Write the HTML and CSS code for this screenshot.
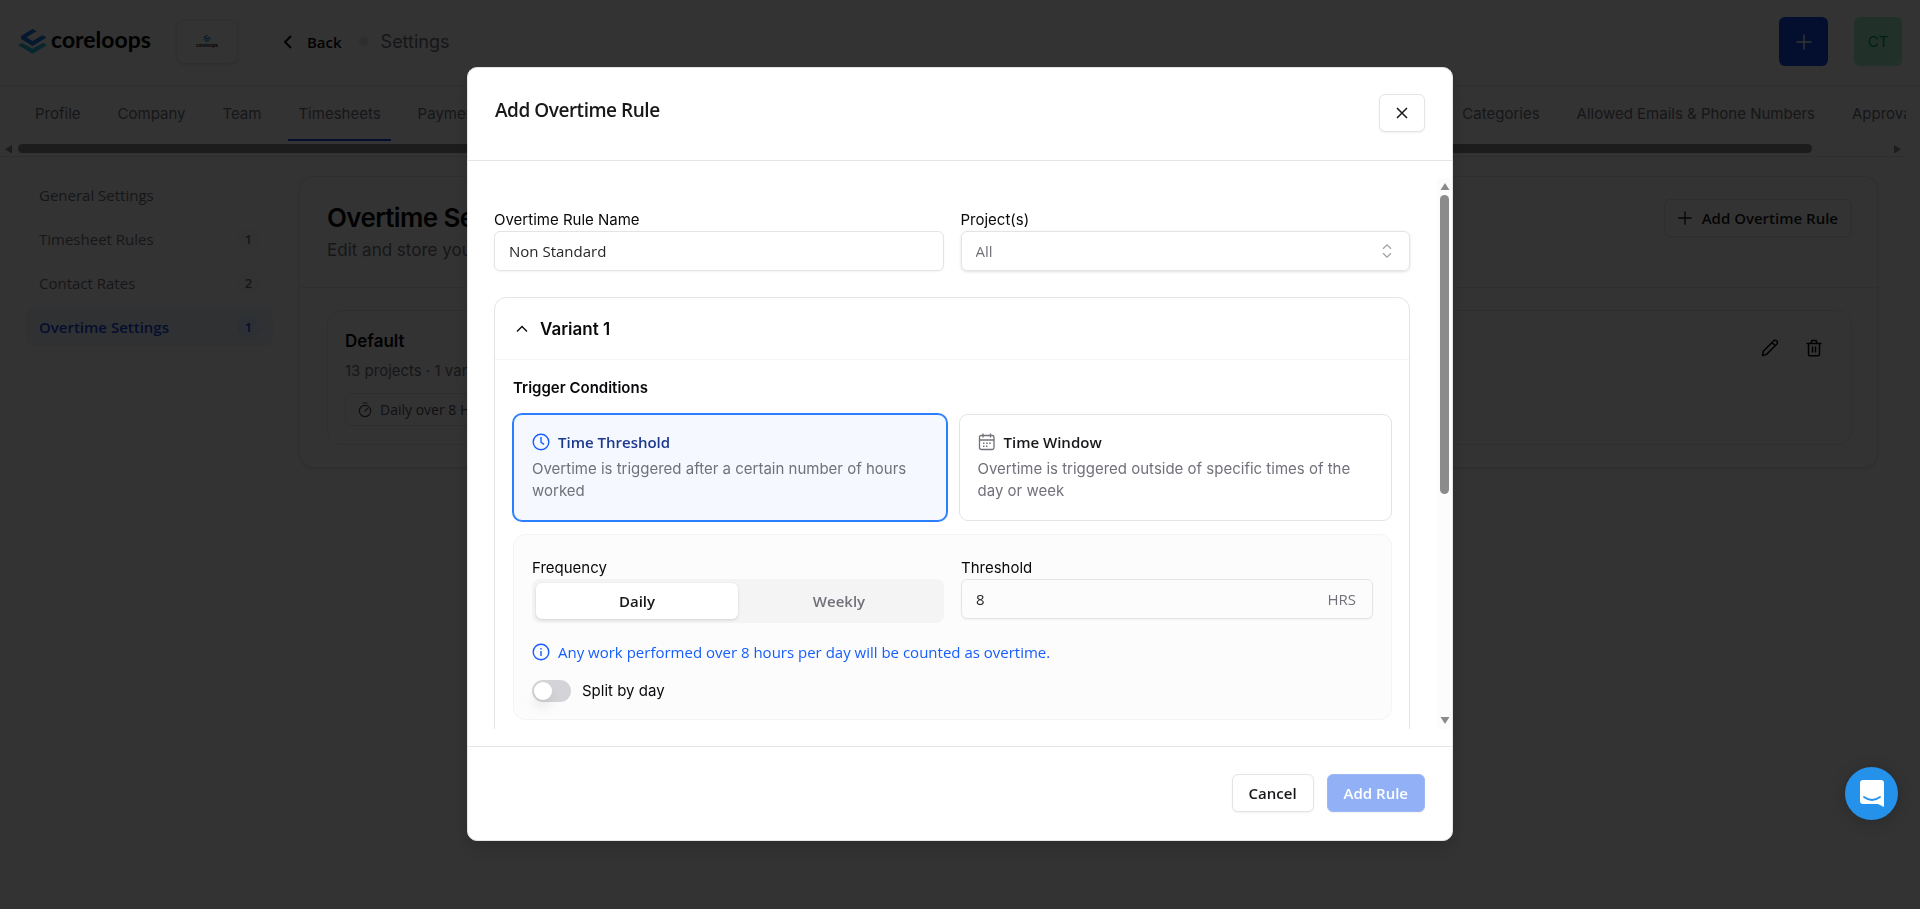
FILE: index.html
```html
<!DOCTYPE html>
<html lang="en">
<head>
    <meta charset="UTF-8">
    <meta name="viewport" content="width=device-width, initial-scale=1.0">
    <title>Overtime Settings</title>
    <link rel="stylesheet" href="styles.css">
</head>
<body>
    <!-- shared icons -->
    <svg width="0" height="0" class="defs">
        <symbol id="logo-mark" viewBox="0 0 29 25">
            <path d="M14.500 0 L18.500 2.200 L8.500 8.300 L14.500 12 L24.500 6.200 L28.500 8.500 L14.500 17 L3 10 V7 Z" fill="#1c78e0"/>
            <path d="M0 16 L4 14 L14.500 19.800 L25 14 L29 16 L14.500 24.800 Z" fill="#22b8dc"/>
        </symbol>
        <symbol id="plus" viewBox="0 0 16 16">
            <path d="M8 1v14M1 8h14" fill="none" stroke="currentColor" stroke-width="1.500" stroke-linecap="round"/>
        </symbol>
    </svg>

    <header class="topbar">
        <a href="#" class="logo"><svg width="29" height="25"><use href="#logo-mark"/></svg><span>coreloops</span></a>
        <button class="org"><svg width="8" height="7"><use href="#logo-mark"/></svg><span>coreloops</span></button>
        <a href="#" class="back">
            <svg width="10" height="14" viewBox="0 0 10 14"><path d="M8 1 L2 7 L8 13" fill="none" stroke="currentColor" stroke-width="2"/></svg>
            Back
        </a>
        <span class="dot"></span>
        <span class="crumb">Settings</span>
        <button class="new-btn" aria-label="New"><svg width="16" height="16"><use href="#plus"/></svg></button>
        <button class="avatar">CT</button>
    </header>

    <nav class="tabs">
        <a href="#">Profile</a>
        <a href="#">Company</a>
        <a href="#">Team</a>
        <a href="#" class="active">Timesheets</a>
        <a href="#">Payments</a>
        <a href="#" class="tab-right">Categories</a>
        <a href="#">Allowed Emails &amp; Phone Numbers</a>
        <a href="#" class="tab-cut">Approvals</a>
    </nav>
    <div class="hscroll">
        <svg width="8" height="10" viewBox="0 0 8 10"><path d="M8 1v8.500L1 5.200z"/></svg>
        <div class="hthumb"></div>
        <svg width="8" height="10" viewBox="0 0 8 10"><path d="M0 1v8.500l7-4.300z"/></svg>
    </div>

    <div class="layout">
        <aside class="sidebar">
            <a href="#">General Settings</a>
            <a href="#">Timesheet Rules <span class="count">1</span></a>
            <a href="#">Contact Rates <span class="count">2</span></a>
            <a href="#" class="active">Overtime Settings <span class="count">1</span></a>
        </aside>

        <main class="card">
            <div class="card-head">
                <div>
                    <h1>Overtime Settings</h1>
                    <p>Edit and store your overtime rules</p>
                </div>
                <button class="btn btn-add"><svg width="14" height="14"><use href="#plus"/></svg>Add Overtime Rule</button>
            </div>
            <div class="rule">
                <div>
                    <h2>Default</h2>
                    <p>13 projects · 1 variant</p>
                    <span class="chip">
                        <svg width="14" height="16" viewBox="0 0 14 16" fill="none" stroke="currentColor" stroke-width="1.200" stroke-linecap="round"><circle cx="7" cy="9" r="5.700"/><path d="M5 1h4M7 9l2.500-2.500"/></svg>
                        Daily over 8 HRS
                    </span>
                </div>
                <div class="rule-actions">
                    <button aria-label="Edit"><svg width="18" height="18" viewBox="0 0 18 18" fill="none" stroke="currentColor" stroke-width="1.500" stroke-linejoin="round"><path d="M1.500 16.500l.8-4.300L12.500 2a2.200 2.200 0 0 1 3.200 3.200L5.500 15.400zM11 3.500l3.200 3.200"/></svg></button>
                    <button aria-label="Delete"><svg width="18" height="18" viewBox="0 0 18 18" fill="none" stroke="currentColor" stroke-width="1.500" stroke-linecap="round" stroke-linejoin="round"><path d="M2 4.500h14M3.500 4.500v11a1.200 1.200 0 0 0 1.200 1.200h8.600a1.200 1.200 0 0 0 1.200-1.200v-11M6 4.500l.8-3h4.400l.8 3M7.500 8v5M10.500 8v5"/></svg></button>
                </div>
            </div>
        </main>
    </div>

    <div class="overlay">
        <div class="modal" role="dialog" aria-labelledby="modalTitle">
            <div class="modal-head">
                <h2 id="modalTitle">Add Overtime Rule</h2>
                <button class="btn close" aria-label="Close"><svg width="12" height="12" viewBox="0 0 12 12"><path d="M1 1l10 10M11 1L1 11" stroke="currentColor" stroke-width="1.500"/></svg></button>
            </div>

            <div class="modal-body">
                <div class="content">
                    <div class="row">
                        <div class="field">
                            <label for="ruleName">Overtime Rule Name</label>
                            <input type="text" id="ruleName" value="Non Standard">
                        </div>
                        <div class="field">
                            <label for="projects">Project(s)</label>
                            <div class="select-box">
                                <select id="projects"><option>All</option></select>
                                <svg width="10" height="14" viewBox="0 0 10 14" fill="none" stroke="currentColor" stroke-width="1.300"><path d="M1 4.700l4-3.800 4 3.800M1 9.300l4 3.800 4-3.800"/></svg>
                            </div>
                        </div>
                    </div>

                    <section class="variant">
                        <button class="variant-head">
                            <svg width="12" height="8" viewBox="0 0 12 8"><path d="M1 6.500l5-5 5 5" fill="none" stroke="currentColor" stroke-width="1.400"/></svg>
                            Variant 1
                        </button>
                        <div class="variant-body">
                            <h3>Trigger Conditions</h3>
                            <div class="options">
                                <button class="option selected">
                                    <strong>
                                        <svg width="18" height="18" viewBox="0 0 18 18" fill="none" stroke="currentColor" stroke-width="1.400"><circle cx="9" cy="9" r="7.800"/><path d="M9 4v5.200l3 2.200"/></svg>
                                        Time Threshold
                                    </strong>
                                    <span>Overtime is triggered after a certain number of hours worked</span>
                                </button>
                                <button class="option">
                                    <strong>
                                        <svg width="18" height="18" viewBox="0 0 18 18" fill="none" stroke="currentColor" stroke-width="1.300"><rect x="1.500" y="2.500" width="14.500" height="14" rx="1.800"/><path d="M5 .5v4M12.500 .5v4M1.500 7h14.500"/><path d="M8.200 10.300h5M5 13.300h6" stroke-width="1.500" stroke-dasharray="1.500 1.500"/><path d="M5 10.300h1.500" stroke-width="1.500"/></svg>
                                        Time Window
                                    </strong>
                                    <span>Overtime is triggered outside of specific times of the day or week</span>
                                </button>
                            </div>

                            <div class="panel">
                                <div class="row">
                                    <div class="field">
                                        <span class="label">Frequency</span>
                                        <div class="segmented">
                                            <button class="on">Daily</button>
                                            <button>Weekly</button>
                                        </div>
                                    </div>
                                    <div class="field">
                                        <label for="threshold">Threshold</label>
                                        <div class="unit-box">
                                            <input type="text" id="threshold" value="8">
                                            <span>HRS</span>
                                        </div>
                                    </div>
                                </div>
                                <p class="info">
                                    <svg width="18" height="18" viewBox="0 0 18 18" fill="none" stroke="currentColor" stroke-width="1.400"><circle cx="9" cy="9" r="7.800"/><path d="M9 8v5M9 5v1.500"/></svg>
                                    Any work performed over 8 hours per day will be counted as overtime.
                                </p>
                                <label class="switch"><input type="checkbox">Split by day</label>
                            </div>
                        </div>
                    </section>
                </div>
                <div class="vscroll">
                    <svg width="10" height="8" viewBox="0 0 10 8"><path d="M.5 8h9L5 1z"/></svg>
                    <div class="vthumb"></div>
                    <svg width="10" height="8" viewBox="0 0 10 8"><path d="M.5 0h9L5 7z"/></svg>
                </div>
            </div>

            <div class="modal-foot">
                <button class="btn">Cancel</button>
                <button class="btn btn-primary" disabled>Add Rule</button>
            </div>
        </div>
    </div>

    <button class="chat" aria-label="Open chat">
        <svg width="24" height="27" viewBox="0 0 24 27"><path d="M3 0h18a3 3 0 0 1 3 3v24l-6-3H3a3 3 0 0 1-3-3V3a3 3 0 0 1 3-3z" fill="#fff"/><path d="M4 17q8 6 16 0" fill="none" stroke="#2491eb" stroke-width="1.800" stroke-linecap="round"/></svg>
    </button>
</body>
</html>
```
FILE: styles.css
```css
* { box-sizing: border-box; }
body {
    margin: 0;
    height: 100vh;
    overflow: hidden;
    background: #fdfdfd;
    color: #09090b;
    font-family: Inter, sans-serif;
    font-size: 15px;
    line-height: 22px;
}
h1, h2, h3, p { margin: 0; }
a { color: inherit; text-decoration: none; }
button, input, select { font: inherit; color: inherit; }
button { cursor: pointer; }
svg { flex: none; }
.defs { position: absolute; }

/* top bar */
.topbar {
    display: flex;
    align-items: center;
    height: 86px;
    padding: 0 18px 2px;
    border-bottom: 1px solid #e4e4e7;
}
.logo {
    display: flex;
    align-items: center;
    gap: 4px;
    font-family: Lato, sans-serif;
    font-size: 23px;
    font-weight: 700;
    color: #000;
}
.logo span { padding-bottom: 6px; }
.org {
    display: flex;
    flex-direction: column;
    align-items: center;
    justify-content: center;
    width: 62px;
    height: 44px;
    margin-left: 25px;
    padding: 0;
    background: #fff;
    border: 1px solid #e9e9ec;
    border-radius: 8px;
    box-shadow: 0 1px 3px rgba(0,0,0,0.1);
}
.org span { font: 700 5px/6px Lato, sans-serif; }
.back {
    display: flex;
    align-items: center;
    gap: 14px;
    margin-left: 45px;
    font: 600 15px/22px "Open Sans", sans-serif;
}
.dot {
    width: 9px;
    height: 9px;
    margin: 0 13px 0 17px;
    border-radius: 50%;
    background: #e4e4e7;
}
.crumb { font-size: 18px; color: #71717b; }
.new-btn {
    display: flex;
    align-items: center;
    justify-content: center;
    width: 49px;
    height: 49px;
    margin-left: auto;
    border: 0;
    border-radius: 6px;
    background: #1447e6;
    color: #fff;
}
.avatar {
    width: 48px;
    height: 49px;
    margin-left: 26px;
    padding: 0;
    border: 0;
    border-radius: 6px;
    background: #a4f4cf;
    color: #009966;
}

/* tabs */
.tabs {
    display: flex;
    gap: 17px;
    height: 55px;
    margin-right: 14px;
    padding-left: 25px;
    overflow: hidden;
    white-space: nowrap;
    color: #71717b;
}
.tabs a { padding: 17px 10px 0; }
.tabs .active { border-bottom: 2px solid #1447e6; }
.tabs .tab-right { margin-left: auto; }
.tabs .tab-cut { width: 64px; padding-right: 0; overflow: hidden; }
.hscroll {
    display: flex;
    align-items: center;
    height: 16px;
    margin-right: 14px;
    padding: 0 4px;
    border-bottom: 1px solid #e4e4e7;
    fill: #8b8b8b;
}
.hthumb {
    flex: 1;
    height: 9px;
    margin: 0 82px 0 6px;
    border-radius: 5px;
    background: #8b8b8b;
}

/* settings page behind the dialog */
.layout {
    display: flex;
    align-items: flex-start;
    gap: 26px;
    padding: 19px 42px 0 26px;
}
.sidebar {
    display: flex;
    flex-direction: column;
    gap: 6px;
    width: 247px;
    color: #71717b;
    font: 15px/22px "Open Sans", sans-serif;
}
.sidebar a {
    display: flex;
    align-items: center;
    justify-content: space-between;
    height: 38px;
    padding: 0 13px;
    border-radius: 8px;
}
.sidebar .active { background: #eff6ff; color: #1447e6; font-weight: 600; }
.count {
    min-width: 23px;
    border-radius: 12px;
    background: #f9f9fa;
    text-align: center;
    font-size: 13px;
    font-weight: 600;
}
.active .count { background: #dbeafe; }
.card {
    flex: 1;
    padding-bottom: 22px;
    border: 1px solid #e9e9ec;
    border-radius: 14px;
    background: #fff;
    box-shadow: 0 1px 3px rgba(0,0,0,0.1);
}
.card-head {
    display: flex;
    align-items: flex-start;
    justify-content: space-between;
    height: 111px;
    padding: 22px 25px 0 27px;
    border-bottom: 1px solid #e9e9ec;
}
h1 { font-size: 26px; font-weight: 600; line-height: 38px; letter-spacing: -0.025em; }
.card-head p { font-size: 17px; line-height: 26px; color: #71717b; }
.btn {
    display: flex;
    align-items: center;
    justify-content: center;
    height: 38px;
    padding: 0 16px;
    border: 1px solid #e4e4e7;
    border-radius: 6px;
    background: #fff;
    color: #18181b;
    font: 600 15px/22px "Open Sans", sans-serif;
    box-shadow: 0 1px 2px rgba(0,0,0,0.06);
}
.btn-add { gap: 10px; padding: 0 13px; }
.rule {
    display: flex;
    justify-content: space-between;
    height: 135px;
    margin: 22px 25px 0 27px;
    padding: 17px;
    border: 1px solid #e9e9ec;
    border-radius: 14px;
}
.rule h2 { font-size: 17px; font-weight: 600; line-height: 26px; }
.rule p { margin: 6px 0 11px; color: #71717b; }
.chip {
    display: inline-flex;
    align-items: center;
    gap: 8px;
    height: 33px;
    padding: 0 12px;
    border: 1px solid #e4e4e7;
    border-radius: 6px;
    color: #52525c;
    font: 14px/22px "Open Sans", sans-serif;
}
.rule-actions { display: flex; align-items: flex-start; gap: 26px; padding: 11px 11px 0; }
.rule-actions button { display: flex; padding: 0; border: 0; background: none; }

/* dialog */
.overlay {
    position: fixed;
    inset: 0;
    display: flex;
    justify-content: center;
    padding: 67px 16px 68px;
    background: rgba(0,0,0,0.8);
}
.modal {
    display: flex;
    flex-direction: column;
    width: 100%;
    max-width: 986px;
    border: 1px solid #e4e4e7;
    border-radius: 10px;
    background: #fff;
    box-shadow: 0 10px 20px rgba(0,0,0,0.15);
}
.modal-head {
    display: flex;
    align-items: flex-start;
    justify-content: space-between;
    height: 93px;
    padding: 26px 27px 0;
    border-bottom: 1px solid #e4e4e7;
}
.modal-head h2 {
    color: #18181b;
    font: 600 19px/32px "Open Sans", sans-serif;
    letter-spacing: -0.025em;
}
.close { width: 46px; padding: 0; }
.modal-body {
    display: flex;
    flex: 1;
    min-height: 0;
    margin: 17px 0;
}
.content {
    flex: 1;
    padding: 31px 27px 0 26px;
    overflow: hidden;
}
.row { display: grid; grid-template-columns: 1fr 1fr; gap: 17px; }
.field label, .label { display: block; line-height: 22px; }
input[type="text"], select {
    display: block;
    width: 100%;
    height: 40px;
    padding: 0 14px;
    border: 1px solid #e4e4e7;
    border-radius: 6px;
    background: transparent;
    color: #27272a;
    font: 15px/22px "Open Sans", sans-serif;
    box-shadow: 0 1px 2px rgba(0,0,0,0.05);
}
.select-box, .unit-box { position: relative; }
select { appearance: none; color: #71717b; box-shadow: 0 1px 3px rgba(0,0,0,0.12); }
.select-box svg { position: absolute; right: 18px; top: 13px; color: #a1a1a9; }
.unit-box span {
    position: absolute;
    right: 17px;
    top: 9px;
    color: #71717b;
    font: 15px/22px "Open Sans", sans-serif;
}

.variant { margin-top: 26px; border: 1px solid #e4e4e7; border-radius: 12px; }
.variant-head {
    display: flex;
    align-items: center;
    gap: 12px;
    width: 100%;
    height: 62px;
    padding: 0 21px;
    border: 0;
    border-bottom: 1px solid #f4f4f5;
    background: none;
    font-size: 17px;
    font-weight: 600;
}
.variant-body { padding: 17px 17px 40px 18px; }
h3 { font-size: 15px; font-weight: 600; line-height: 22px; }
.options { display: grid; grid-template-columns: 1fr 1fr; gap: 12px; margin-top: 15px; }
.option {
    display: flex;
    flex-direction: column;
    height: 107px;
    padding: 16px 18px;
    border: 1px solid #e4e4e7;
    border-radius: 9px;
    background: #fff;
    color: #71717b;
    text-align: left;
}
.option strong {
    display: flex;
    align-items: center;
    gap: 8px;
    margin-bottom: 5px;
    font: 600 15px/22px "Open Sans", sans-serif;
    color: #18181b;
}
.option svg { color: #71717b; }
.option.selected { border-color: #2b7fff; background: #f5f8ff; box-shadow: 0 0 0 1px #2b7fff; }
.selected strong { color: #1c398e; }
.option.selected svg { color: #155dfc; }

.panel {
    margin-top: 13px;
    padding: 22px 18px 17px;
    border: 1px solid #f4f4f5;
    border-radius: 12px;
    background: #fcfcfc;
}
.segmented {
    display: flex;
    height: 44px;
    padding: 4px;
    border-radius: 8px;
    background: #f4f4f5;
}
.segmented button {
    flex: 1;
    border: 0;
    border-radius: 6px;
    background: none;
    color: #71717b;
    font: 600 15px/22px "Open Sans", sans-serif;
}
.segmented .on { background: #fff; color: #18181b; box-shadow: 0 1px 3px rgba(0,0,0,0.15); }
.info {
    display: flex;
    align-items: center;
    gap: 8px;
    margin: 18px 0 17px;
    color: #155dfc;
    font: 15px/22px "Open Sans", sans-serif;
}
.switch { display: flex; align-items: center; gap: 11px; }
.switch input {
    appearance: none;
    display: flex;
    align-items: center;
    width: 39px;
    height: 22px;
    margin: 0;
    padding: 2px;
    border-radius: 11px;
    background: #d4d4d8;
}
.switch input::before {
    content: "";
    width: 18px;
    height: 18px;
    border-radius: 50%;
    background: #fff;
    box-shadow: 0 8px 12px rgba(0,0,0,0.08);
}
.switch input:checked { justify-content: flex-end; background: #155dfc; }

.vscroll {
    display: flex;
    flex-direction: column;
    align-items: center;
    width: 15px;
    padding: 4px 0;
    background: #fcfcfc;
    fill: #8b8b8b;
}
.vthumb {
    width: 9px;
    height: 55%;
    margin: 5px 0 auto;
    border-radius: 5px;
    background: #8b8b8b;
}
.modal-foot {
    display: flex;
    justify-content: flex-end;
    gap: 13px;
    padding: 27px 27px 28px;
    border-top: 1px solid #e4e4e7;
}
.btn-primary { border-color: #9db8f6; background: #92b0f5; color: #fff; }

.chat {
    position: fixed;
    right: 22px;
    bottom: 89px;
    display: flex;
    align-items: center;
    justify-content: center;
    width: 53px;
    height: 53px;
    padding: 0;
    border: 0;
    border-radius: 50%;
    background: #2491eb;
    box-shadow: 0 2px 16px rgba(0,0,0,0.2);
}
```
